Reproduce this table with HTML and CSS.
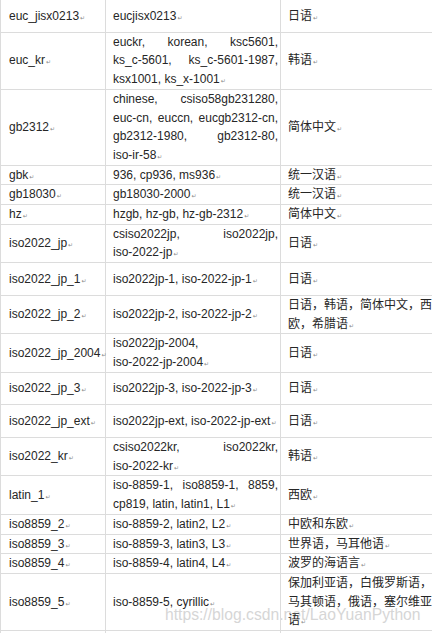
FILE: index.html
```html
<!DOCTYPE html>
<html lang="zh-CN">
<head>
<meta charset="utf-8">
<title>Python codecs</title>
<link rel="stylesheet" href="styles.css">
</head>
<body>
<div class="wm">https://blog.csdn.net/LaoYuanPython</div>
<table class="codecs">
  <colgroup><col class="c1"><col class="c2"><col class="c3"></colgroup>
  <tbody>
    <tr class="tall"><td class="nm">euc_jisx0213<span class="pm">↵</span></td><td class="al"><span class="nw">eucjisx0213<span class="pm">↵</span></span></td><td class="lg">日语<span class="pm">↵</span></td></tr>
    <tr><td class="nm">euc_kr<span class="pm">↵</span></td><td class="al"><span class="nw">euckr,</span> <span class="nw">korean,</span> <span class="nw">ksc5601,</span> <span class="nw">ks_c-5601,</span> <span class="nw">ks_c-5601-1987,</span> <span class="nw">ksx1001,</span> <span class="nw">ks_x-1001<span class="pm">↵</span></span></td><td class="lg">韩语<span class="pm">↵</span></td></tr>
    <tr><td class="nm">gb2312<span class="pm">↵</span></td><td class="al"><span class="nw">chinese,</span> <span class="nw">csiso58gb231280,</span> <span class="nw">euc-cn,</span> <span class="nw">euccn,</span> <span class="nw">eucgb2312-cn,</span> <span class="nw">gb2312-1980,</span> <span class="nw">gb2312-80,</span> <span class="nw">iso-ir-58<span class="pm">↵</span></span></td><td class="lg">简体中文<span class="pm">↵</span></td></tr>
    <tr><td class="nm">gbk<span class="pm">↵</span></td><td class="al"><span class="nw">936,</span> <span class="nw">cp936,</span> <span class="nw">ms936<span class="pm">↵</span></span></td><td class="lg">统一汉语<span class="pm">↵</span></td></tr>
    <tr><td class="nm">gb18030<span class="pm">↵</span></td><td class="al"><span class="nw">gb18030-2000<span class="pm">↵</span></span></td><td class="lg">统一汉语<span class="pm">↵</span></td></tr>
    <tr><td class="nm">hz<span class="pm">↵</span></td><td class="al"><span class="nw">hzgb,</span> <span class="nw">hz-gb,</span> <span class="nw">hz-gb-2312<span class="pm">↵</span></span></td><td class="lg">简体中文<span class="pm">↵</span></td></tr>
    <tr><td class="nm">iso2022_jp<span class="pm">↵</span></td><td class="al"><span class="nw">csiso2022jp,</span> <span class="nw">iso2022jp,</span> <span class="nw">iso-2022-jp<span class="pm">↵</span></span></td><td class="lg">日语<span class="pm">↵</span></td></tr>
    <tr class="tall"><td class="nm">iso2022_jp_1<span class="pm">↵</span></td><td class="al"><span class="nw">iso2022jp-1,</span> <span class="nw">iso-2022-jp-1<span class="pm">↵</span></span></td><td class="lg">日语<span class="pm">↵</span></td></tr>
    <tr><td class="nm">iso2022_jp_2<span class="pm">↵</span></td><td class="al"><span class="nw">iso2022jp-2,</span> <span class="nw">iso-2022-jp-2<span class="pm">↵</span></span></td><td class="lg">日语，韩语，简体中文，西欧，希腊语<span class="pm">↵</span></td></tr>
    <tr><td class="nm">iso2022_jp_2004<span class="pm">↵</span></td><td class="al"><span class="nw">iso2022jp-2004,</span> <span class="nw">iso-2022-jp-2004<span class="pm">↵</span></span></td><td class="lg">日语<span class="pm">↵</span></td></tr>
    <tr class="tall"><td class="nm">iso2022_jp_3<span class="pm">↵</span></td><td class="al"><span class="nw">iso2022jp-3,</span> <span class="nw">iso-2022-jp-3<span class="pm">↵</span></span></td><td class="lg">日语<span class="pm">↵</span></td></tr>
    <tr class="tall"><td class="nm">iso2022_jp_ext<span class="pm">↵</span></td><td class="al"><span class="nw">iso2022jp-ext,</span> <span class="nw">iso-2022-jp-ext<span class="pm">↵</span></span></td><td class="lg">日语<span class="pm">↵</span></td></tr>
    <tr><td class="nm">iso2022_kr<span class="pm">↵</span></td><td class="al"><span class="nw">csiso2022kr,</span> <span class="nw">iso2022kr,</span> <span class="nw">iso-2022-kr<span class="pm">↵</span></span></td><td class="lg">韩语<span class="pm">↵</span></td></tr>
    <tr><td class="nm">latin_1<span class="pm">↵</span></td><td class="al"><span class="nw">iso-8859-1,</span> <span class="nw">iso8859-1,</span> <span class="nw">8859,</span> <span class="nw">cp819,</span> <span class="nw">latin,</span> <span class="nw">latin1,</span> <span class="nw">L1<span class="pm">↵</span></span></td><td class="lg">西欧<span class="pm">↵</span></td></tr>
    <tr><td class="nm">iso8859_2<span class="pm">↵</span></td><td class="al"><span class="nw">iso-8859-2,</span> <span class="nw">latin2,</span> <span class="nw">L2<span class="pm">↵</span></span></td><td class="lg">中欧和东欧<span class="pm">↵</span></td></tr>
    <tr><td class="nm">iso8859_3<span class="pm">↵</span></td><td class="al"><span class="nw">iso-8859-3,</span> <span class="nw">latin3,</span> <span class="nw">L3<span class="pm">↵</span></span></td><td class="lg">世界语，马耳他语<span class="pm">↵</span></td></tr>
    <tr><td class="nm">iso8859_4<span class="pm">↵</span></td><td class="al"><span class="nw">iso-8859-4,</span> <span class="nw">latin4,</span> <span class="nw">L4<span class="pm">↵</span></span></td><td class="lg">波罗的海语言<span class="pm">↵</span></td></tr>
    <tr><td class="nm">iso8859_5<span class="pm">↵</span></td><td class="al"><span class="nw">iso-8859-5,</span> <span class="nw">cyrillic<span class="pm">↵</span></span></td><td class="lg">保加利亚语，白俄罗斯语，马其顿语，俄语，塞尔维亚语<span class="pm">↵</span></td></tr>
    <tr class="rest"><td></td><td></td><td></td></tr>
  </tbody>
</table>
</body>
</html>
```
FILE: styles.css
```css
html {
  margin: 0;
  padding: 0;
  background: #ffffff;
}

body {
  margin: 0;
  padding: 0;
  font-family: "Liberation Sans", Arial, "Noto Sans CJK SC", sans-serif;
  font-size: 12px;
  color: #262626;
}

.wm {
  position: absolute;
  left: 165px;
  top: 605px;
  z-index: -1;
  font-family: "Liberation Sans", Arial, sans-serif;
  font-size: 15.7px;
  line-height: 20px;
  color: #d6d6d6;
  white-space: nowrap;
}

.codecs {
  border-collapse: collapse;
  table-layout: fixed;
  width: 440px;
  margin-top: -1px;
  margin-left: 0;
}

.c1 { width: 105px; }
.c2 { width: 175px; }
.c3 { width: 160px; }

.codecs td {
  border: 1px solid #dcdcdc;
  padding: 0;
  line-height: 18.7px;
  vertical-align: middle;
  text-align: left;
}

.codecs td.nm {
  white-space: nowrap;
  padding: 0 2px 0 8px;
}

.codecs td.al {
  text-align: justify;
  padding: 0 2px 0 7px;
}

.codecs td.lg {
  padding: 0 4px 0 7px;
}

.codecs tr.tall td {
  padding-top: 6.5px;
  padding-bottom: 6.5px;
}

.codecs tr.rest td {
  height: 30px;
}

.nw {
  white-space: nowrap;
}

.pm {
  display: inline-block;
  width: 4px;
  font-family: "DejaVu Sans", sans-serif;
  font-size: 6px;
  line-height: 0;
  color: #8a8a8a;
  margin-left: 1px;
  vertical-align: baseline;
}
```
